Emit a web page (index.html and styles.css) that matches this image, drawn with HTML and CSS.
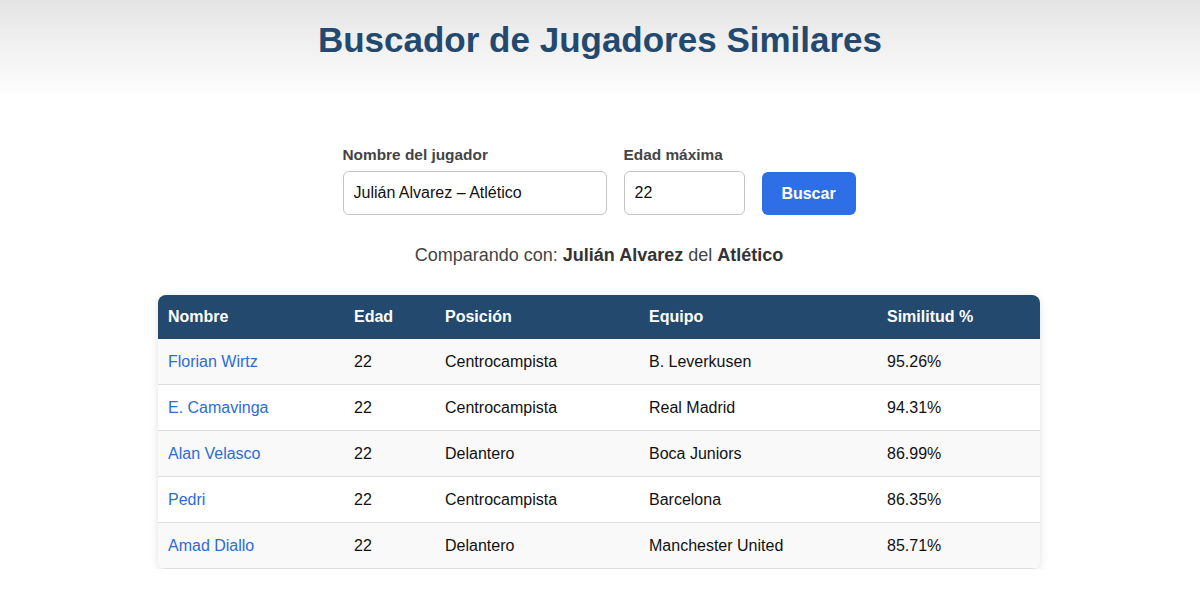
FILE: index.html
```html
<!DOCTYPE html>
<html lang="es">
<head>
<meta charset="utf-8">
<title>Buscador de Jugadores Similares</title>
<link rel="stylesheet" href="styles.css">
</head>
<body>
<header class="top">
  <h1 class="title">Buscador de Jugadores Similares</h1>
</header>
<main class="content">
  <form class="search">
    <div class="field">
      <label class="label" for="nombre">Nombre del jugador</label>
      <input class="input input-name" id="nombre" type="text" value="Julián Alvarez – Atlético">
    </div>
    <div class="field">
      <label class="label" for="edad">Edad máxima</label>
      <input class="input input-age" id="edad" type="text" value="22">
    </div>
    <button class="btn" type="button">Buscar</button>
  </form>
  <p class="compare">Comparando con: <strong>Julián Alvarez</strong> del <strong>Atlético</strong></p>
  <table class="results">
    <colgroup>
      <col class="c1"><col class="c2"><col class="c3"><col class="c4"><col class="c5">
    </colgroup>
    <thead>
      <tr><th>Nombre</th><th>Edad</th><th>Posición</th><th>Equipo</th><th>Similitud %</th></tr>
    </thead>
    <tbody>
      <tr><td><a href="#">Florian Wirtz</a></td><td>22</td><td>Centrocampista</td><td>B. Leverkusen</td><td>95.26%</td></tr>
      <tr><td><a href="#">E. Camavinga</a></td><td>22</td><td>Centrocampista</td><td>Real Madrid</td><td>94.31%</td></tr>
      <tr><td><a href="#">Alan Velasco</a></td><td>22</td><td>Delantero</td><td>Boca Juniors</td><td>86.99%</td></tr>
      <tr><td><a href="#">Pedri</a></td><td>22</td><td>Centrocampista</td><td>Barcelona</td><td>86.35%</td></tr>
      <tr><td><a href="#">Amad Diallo</a></td><td>22</td><td>Delantero</td><td>Manchester United</td><td>85.71%</td></tr>
    </tbody>
  </table>
</main>
</body>
</html>
```
FILE: styles.css
```css
* { box-sizing: border-box; }
html, body { margin: 0; padding: 0; }
body {
  font-family: "Liberation Sans", Arial, Helvetica, sans-serif;
  background: #ffffff;
  color: #222;
}
.top {
  height: 93px;
  padding-top: 20px;
  background: linear-gradient(to bottom, #e4e4e4 0%, #f1f1f1 50%, #fdfdfd 100%);
  text-align: center;
}
.title {
  margin: 0;
  font-size: 35px;
  line-height: 40px;
  font-weight: bold;
  color: #24496f;
}
.content {
  padding-top: 53px;
  padding-right: 2px;
  display: flex;
  flex-direction: column;
  align-items: center;
}
.search {
  display: flex;
  align-items: flex-end;
  gap: 17px;
  margin: 0;
}
.field { display: flex; flex-direction: column; }
.label {
  font-size: 15.4px;
  line-height: 17px;
  font-weight: bold;
  color: #444;
  margin-bottom: 8px;
}
.input {
  height: 44px;
  border: 1px solid #c4c4c4;
  border-radius: 6px;
  padding: 0 10px;
  font-family: "Liberation Sans", Arial, Helvetica, sans-serif;
  font-size: 16px;
  color: #111;
  background: #fff;
}
.input-name { width: 264px; }
.input-age { width: 121px; }
.btn {
  width: 94px;
  height: 43px;
  border: none;
  border-radius: 6px;
  background: #2e6ee6;
  color: #fff;
  font-family: "Liberation Sans", Arial, Helvetica, sans-serif;
  font-size: 16px;
  font-weight: bold;
}
.compare {
  margin: 30px 0 0;
  font-size: 18px;
  line-height: 21px;
  color: #444;
}
.compare strong { color: #333; }
.results {
  margin-top: 29px;
  width: 882px;
  border-collapse: separate;
  border-spacing: 0;
  border-radius: 8px;
  overflow: hidden;
  box-shadow: 0 2px 8px rgba(0, 0, 0, 0.12);
  font-size: 16px;
  table-layout: fixed;
}
.c1 { width: 186px; }
.c2 { width: 91px; }
.c3 { width: 204px; }
.c4 { width: 238px; }
.c5 { width: 163px; }
.results th {
  background: #234a6e;
  color: #fff;
  text-align: left;
  font-weight: bold;
  padding: 12px 10px;
  line-height: 20px;
}
.results td {
  padding: 12px 10px;
  line-height: 21px;
  border-bottom: 1px solid #dddddd;
  color: #111;
}
.results tbody tr:nth-child(odd) td { background: #f9f9f9; }
.results tbody tr:nth-child(even) td { background: #ffffff; }
.results a { color: #2b6cd6; text-decoration: none; }
```
